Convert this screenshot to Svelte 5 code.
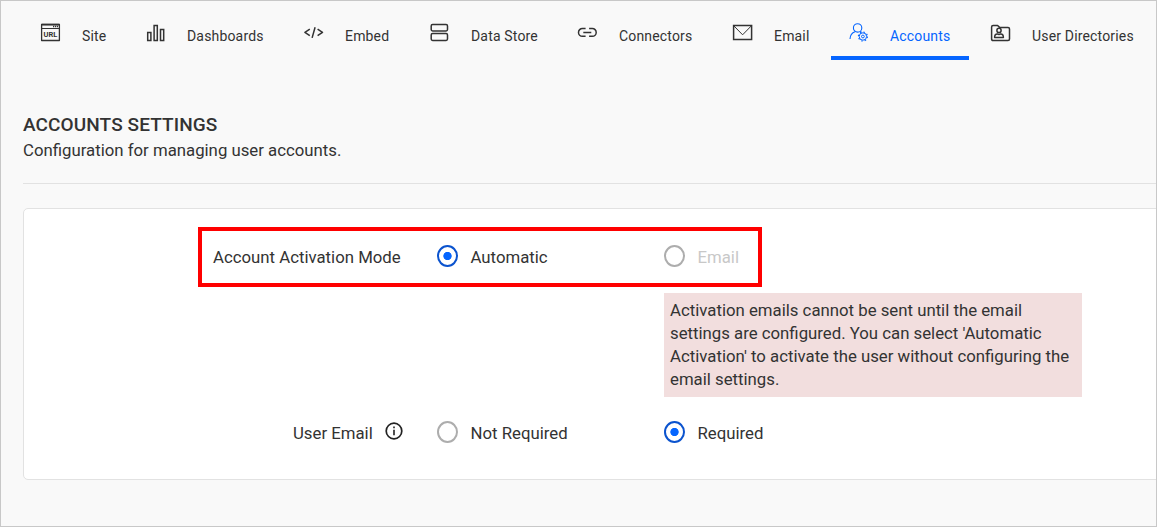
<script>
  const tabs = [
    { id: 'site', label: 'Site' },
    { id: 'dashboards', label: 'Dashboards', snug: true },
    { id: 'embed', label: 'Embed' },
    { id: 'store', label: 'Data Store' },
    { id: 'connectors', label: 'Connectors' },
    { id: 'email', label: 'Email' },
    { id: 'accounts', label: 'Accounts', snug: true },
    { id: 'directories', label: 'User Directories' }
  ];
  let active = $state('accounts');
  let activation = $state('automatic');
  let userEmail = $state('required');
</script>

{#snippet icon(id)}
  <svg class="icon" width="22" height="22" viewBox="0 0 22 22" fill="none" stroke="currentColor" stroke-width="1.3" stroke-linejoin="round" aria-hidden="true">
    {#if id === 'site'}
      <path d="M1.6 2.5h17.8v16H1.6z" />
      <path d="M1.6 2.6h17.8" stroke-width="1.6" />
      <path d="M2 6.5h17" stroke-width="1" />
      <path d="M13 4.5h5" stroke-dasharray="1.2 .7" />
      <text x="10.5" y="15" text-anchor="middle">URL</text>
    {:else if id === 'dashboards'}
      <path d="M1.7 10.6h3.2v7.8H1.7zM8.1 3.6h3.2v14.8H8.1zM14.5 7.5h3.2v10.9h-3.2z" stroke-width="1.5" stroke-linejoin="miter" />
    {:else if id === 'embed'}
      <path d="M6.8 7.1 1.9 10.4l4.9 3.3M14.6 7.1l4.9 3.3-4.9 3.3M12.1 5.2 9.1 15.9" stroke-width="1.5" />
    {:else if id === 'store'}
      <rect x="2.2" y="2.6" width="16.3" height="6.4" rx="1.4" stroke-width="1.5" />
      <rect x="2.2" y="11.6" width="16.3" height="6.9" rx="1.4" stroke-width="1.5" />
    {:else if id === 'connectors'}
      <path d="M8.6 6.5H5.4a3.9 3.9 0 0 0 0 7.8h3.2M12.1 6.5h3.2a3.9 3.9 0 0 1 0 7.8h-3.2M6.3 10.4h8" stroke-width="1.5" />
    {:else if id === 'email'}
      <path d="M1.6 3.5h18v14h-18z" stroke-width="1.5" stroke-linejoin="miter" />
      <path d="m1.8 3.8 8.8 9 8.8-9" stroke-width="1" />
    {:else if id === 'accounts'}
      <circle cx="8.6" cy="5.9" r="4.2" stroke-width="1.1" />
      <path d="M1 17c.2-3.6 2-6.3 5-7.3M11.1 9.4l1.4.8" stroke-width="1.1" />
      <circle cx="13.9" cy="14.5" r="3.7" stroke-width="1" />
      <circle cx="13.9" cy="14.5" r="1.4" stroke-width="1" />
      <circle cx="13.9" cy="14.5" r="4.5" stroke-width="1.2" stroke-dasharray="1.5 2.034" />
    {:else}
      <path d="M1.6 17V5q0-1.5 1.5-1.5h4.5l2 1.9H18q1.5 0 1.5 1.5V17q0 1.5-1.5 1.5H3.1Q1.6 18.5 1.6 17z" stroke-width="1.5" />
      <circle cx="9" cy="8.4" r="2.1" stroke-width="1.5" />
      <path d="M4.6 15.5c0-2.6 1.2-3.6 2.6-3.6.8.5 2.8.5 3.6 0 1.4 0 2.6 1 2.6 3.6z" stroke-width="1.5" />
    {/if}
  </svg>
{/snippet}

<div class="page">
  <nav>
    {#each tabs as tab}
      <button class="tab" class:snug={tab.snug} class:active={active === tab.id} onclick={() => (active = tab.id)}>
        {@render icon(tab.id)}
        <span>{tab.label}</span>
      </button>
    {/each}
  </nav>

  <header>
    <h1>ACCOUNTS SETTINGS</h1>
    <p>Configuration for managing user accounts.</p>
  </header>

  <section class="card">
    <div class="row highlighted">
      <div class="label">Account Activation Mode</div>
      <label><input type="radio" name="activation" value="automatic" bind:group={activation} />Automatic</label>
      <label class="disabled"><input type="radio" name="activation" value="email" bind:group={activation} disabled />Email</label>
    </div>
    <div class="notice">Activation emails cannot be sent until the email settings are configured. You can select 'Automatic Activation' to activate the user without configuring the email settings.</div>
    <div class="row">
      <div class="label info-label">
        User Email
        <svg width="18" height="18" viewBox="0 0 18 18" fill="none" stroke="#222" aria-hidden="true">
          <circle cx="9" cy="9" r="7.8" stroke-width="1.7" />
          <path d="M9 7.8v5.4M9 4.6v1.7" stroke-width="1.6" />
        </svg>
      </div>
      <label><input type="radio" name="useremail" value="optional" bind:group={userEmail} />Not Required</label>
      <label><input type="radio" name="useremail" value="required" bind:group={userEmail} />Required</label>
    </div>
  </section>
</div>

<style>
  :global(body) { margin: 0; }
  .page {
    box-sizing: border-box;
    width: 1157px;
    height: 527px;
    overflow: hidden;
    border: 1px solid #c8c8c8;
    background: #f9f9f9;
    color: #333;
    font: 16.78px/23px Roboto, "Liberation Sans", sans-serif;
  }
  nav {
    display: grid;
    grid-template-columns: 106px 157px 126px 148px 155px 117px 141px 185px;
    height: 59px;
    padding-left: 21px;
  }
  .tab {
    justify-self: start;
    box-sizing: border-box;
    display: flex;
    align-items: flex-start;
    height: 59px;
    padding: 21px 18.6px 0 18px;
    border: 0;
    border-bottom: 4px solid transparent;
    background: none;
    color: #333;
    font: 14px/28px Roboto, "Liberation Sans", sans-serif;
    letter-spacing: .17px;
    white-space: nowrap;
  }
  .tab.active { color: #0565ff; border-bottom-color: #0565ff; }
  .tab span { margin-left: 20px; }
  .tab.snug span { margin-left: 19px; }
  .icon text {
    font: 700 7.5px Roboto, "Liberation Sans", sans-serif;
    letter-spacing: 0;
    fill: currentColor;
    stroke: none;
  }
  header {
    height: 124px;
    box-sizing: border-box;
    margin-left: 22px;
    padding-top: 52px;
    border-bottom: 1px solid #e2e2e2;
  }
  h1 { margin: 0; font-size: 19px; line-height: 26px; font-weight: 500; letter-spacing: .1px; }
  p { margin: 0; line-height: 24px; }
  .card {
    box-sizing: border-box;
    width: 1160px;
    height: 272px;
    margin: 24px 0 0 22px;
    padding: 18px 0 0 174px;
    border: 1px solid #e2e2e2;
    border-radius: 5px;
    background: #fff;
  }
  .row {
    box-sizing: border-box;
    display: grid;
    grid-template-columns: 239px 227px 1fr;
    align-items: center;
    width: 564px;
    height: 60px;
  }
  .row .label { padding-left: 15px; white-space: nowrap; }
  .row .info-label { display: flex; gap: 12px; padding-left: 95px; }
  .highlighted { position: relative; }
  .highlighted::after {
    content: '';
    position: absolute;
    inset: 0;
    border: 4px solid #f00;
    pointer-events: none;
  }
  label { display: flex; align-items: center; }
  input {
    appearance: none;
    box-sizing: border-box;
    width: 21px;
    height: 22px;
    margin: -2px 12.5px 0 0;
    border: 2px solid #adadad;
    border-radius: 50%;
    background: #fff;
  }
  input:checked {
    border-color: #0b53ce;
    background: radial-gradient(circle, #0565ff 3.8px, #fff 4.5px);
  }
  .disabled { color: #c8c8c8; }
  .notice {
    box-sizing: border-box;
    width: 418px;
    height: 104px;
    margin: 6px 0 6px 466px;
    padding: 6px;
    background: #f2dede;
  }
</style>
